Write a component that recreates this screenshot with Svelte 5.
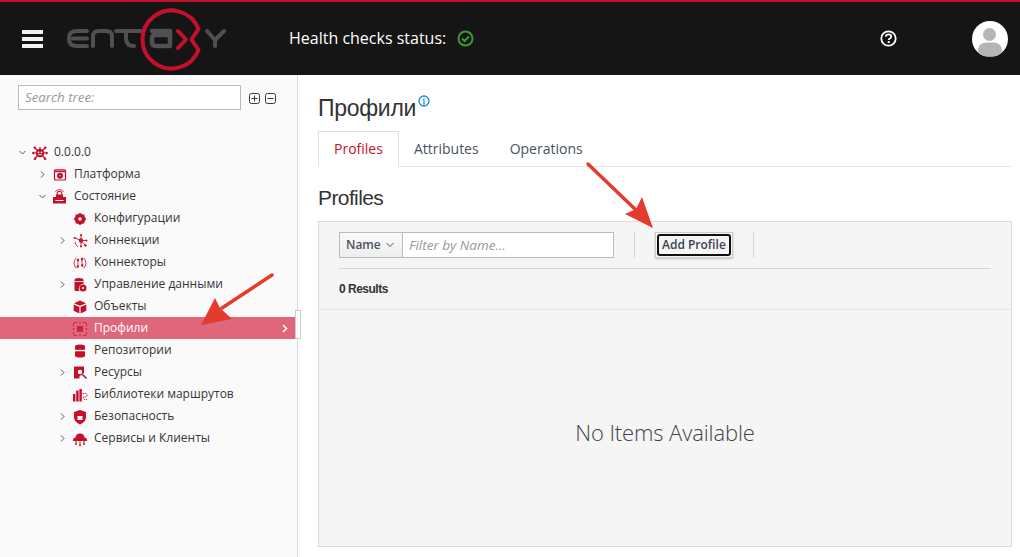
<script>
  const nodes = [
    { label: '0.0.0.0', level: 0, chevron: 'down', icon: 'root' },
    { label: 'Платформа', level: 1, chevron: 'right', icon: 'platform' },
    { label: 'Состояние', level: 1, chevron: 'down', icon: 'state' },
    { label: 'Конфигурации', level: 2, icon: 'gear' },
    { label: 'Коннекции', level: 2, chevron: 'right', icon: 'net' },
    { label: 'Коннекторы', level: 2, icon: 'conn' },
    { label: 'Управление данными', level: 2, chevron: 'right', icon: 'data' },
    { label: 'Объекты', level: 2, icon: 'cube' },
    { label: 'Профили', level: 2, icon: 'profile', selected: true },
    { label: 'Репозитории', level: 2, icon: 'db' },
    { label: 'Ресурсы', level: 2, chevron: 'right', icon: 'res' },
    { label: 'Библиотеки маршрутов', level: 2, icon: 'lib' },
    { label: 'Безопасность', level: 2, chevron: 'right', icon: 'shield' },
    { label: 'Сервисы и Клиенты', level: 2, chevron: 'right', icon: 'cloud' }
  ];
</script>

<div class="page">
  <header class="top">
    <button class="burger" aria-label="menu"><span></span><span></span><span></span></button>
    <svg class="logo" width="170" height="68" viewBox="60 5 170 68" fill="none">
      <g stroke="#505050" stroke-width="4" stroke-linecap="round" stroke-linejoin="round">
        <path d="M87 31H77Q69 31 69 38V39Q69 46 77 46H87M73 38.500H87" />
        <path d="M93 46V36Q93 31 99 31H106Q112 31 112 36V46" />
        <path d="M116 31H141M126 31V38Q126 46 134 46" />
        <path d="M152 31H170V46H156Q152 46 152 42V38Q152 35 156 35H170" stroke-width="4.500" />
        <path d="M207 31L215 40M224 31L215 40V46" />
      </g>
      <path d="M178 31L186 39.500L178 48" stroke="#c4102c" stroke-width="4" stroke-linecap="round" stroke-linejoin="round" />
      <path d="M198.500 29A29 29 0 1 0 198.500 50L191.500 39.500Z" stroke="#c4102c" stroke-width="4" stroke-linejoin="round" />
    </svg>
    <div class="health">
      <span>Health checks status:</span>
      <svg width="17" height="17" viewBox="0 0 17 17" fill="none" stroke="#3b9a35">
        <circle cx="8.500" cy="8.500" r="7" stroke-width="2" />
        <path d="M5 8.500L7.500 11L12 6.500" stroke-width="2" />
      </svg>
    </div>
    <svg class="help" width="17" height="17" viewBox="0 0 17 17">
      <circle cx="8.500" cy="8.500" r="7.200" fill="#111" stroke="#fff" stroke-width="1.800" />
      <path d="M5.800 6.800Q6 4.300 8.500 4.300Q11.200 4.300 11.200 6.500Q11.200 7.800 9.800 8.500Q8.700 9 8.700 10" fill="none" stroke="#fff" stroke-width="1.800" />
      <rect x="7.700" y="11" width="2" height="2" fill="#fff" />
    </svg>
    <svg class="avatar" width="36" height="36" viewBox="0 0 36 36">
      <defs><clipPath id="av"><circle cx="18" cy="18" r="18" /></clipPath></defs>
      <g clip-path="url(#av)">
        <rect width="36" height="35.500" fill="#fff" />
        <circle cx="17.500" cy="13.500" r="6.500" fill="#b5b5b5" />
        <path d="M6 35.500V30Q6 22 14 21.500H22Q30 22 30 30V35.500Z" fill="#b5b5b5" />
      </g>
    </svg>
  </header>

  <div class="body">
    <aside class="side">
      <div class="search">
        <input class="tree-input" placeholder="Search tree:" />
        <svg width="28" height="14" viewBox="0 0 28 14" fill="none" stroke="#333b4a">
          <rect x="1.500" y="2.500" width="10" height="10" rx="2" />
          <path d="M3.500 7.500H9.500M6.500 4.500V10.500" />
          <rect x="17.500" y="2.500" width="10" height="10" rx="2" />
          <path d="M19.500 7.500H25.500" />
        </svg>
      </div>
      <ul class="tree">
        {#each nodes as n}
          <li class="node lvl{n.level}" class:selected={n.selected}>
            <span class="chev">
              {#if n.chevron === 'down'}
                <svg width="9" height="9" viewBox="0 0 9 9" fill="none" stroke="#4a5a70"><path d="M1.500 3L4.500 6L7.500 3" /></svg>
              {:else if n.chevron === 'right'}
                <svg width="9" height="9" viewBox="0 0 9 9" fill="none" stroke="#4a5a70"><path d="M3 1.500L6 4.500L3 7.500" /></svg>
              {/if}
            </span>
            <svg class="ico" width="16" height="16" viewBox="0 0 16 16" fill="#c4102c" stroke="#c4102c" stroke-width="0">
              {#if n.icon === 'root'}
                <path d="M8 8L3 3M8 8L13 3M8 8H1.500M8 8H14.500M8 8L3 13.500M8 8L13 13.500M8 2V8" stroke-width="1.200" />
                <circle cx="8" cy="8" r="4.300" />
                <circle cx="6.500" cy="7.300" r="0.900" fill="#fff" /><circle cx="9.500" cy="7.300" r="0.900" fill="#fff" />
                <rect x="6.300" y="9.300" width="3.400" height="0.800" fill="#fff" />
                <circle cx="2.800" cy="2.800" r="1.300" /><circle cx="13.200" cy="2.800" r="1.300" /><circle cx="1.300" cy="8" r="1.200" /><circle cx="14.700" cy="8" r="1.200" /><circle cx="3" cy="13.700" r="1.300" /><circle cx="13" cy="13.700" r="1.300" />
              {:else if n.icon === 'platform'}
                <rect x="2.500" y="2.800" width="11" height="10.200" rx="1" fill="none" stroke-width="1.200" />
                <path d="M2.500 4.500H13.500" stroke-width="1.400" />
                <circle cx="8" cy="8.700" r="1.800" fill="none" stroke-width="2.400" />
              {:else if n.icon === 'state'}
                <rect x="1" y="8" width="13" height="6.500" />
                <rect x="4" y="5.500" width="7" height="3" />
                <path d="M5.200 7V4.300Q5.200 2.200 7.500 2.200Q9.800 2.200 9.800 4.300V7" fill="none" stroke-width="1.100" />
                <path d="M3.300 2.500Q7.500 -1.300 11.700 2.500" fill="none" stroke-width="0.800" />
                <rect x="3.500" y="11" width="8" height="1" fill="#fff" />
              {:else if n.icon === 'gear'}
                <circle cx="8" cy="8" r="3.600" fill="none" stroke-width="3.600" />
                <path d="M8 1.800V14.200M1.800 8H14.200M3.600 3.600L12.400 12.400M12.400 3.600L3.600 12.400" stroke-width="1.300" stroke-dasharray="1.800 8.600" />
              {:else if n.icon === 'net'}
                <path d="M9 7.500V2M9 7.500H14.500M9 7.500L3 5M9 7.500L9 13.500M9 7.500L13 12" stroke-width="0.900" />
                <path d="M3 9A6.500 6.500 0 0 0 6 14" fill="none" stroke-width="0.800" />
                <circle cx="9" cy="7.500" r="2.200" />
                <circle cx="9" cy="2" r="1.100" /><circle cx="14.500" cy="7.500" r="1" /><circle cx="2.700" cy="5" r="1.100" /><circle cx="9" cy="13.500" r="1" /><circle cx="13.500" cy="12.500" r="1.200" />
              {:else if n.icon === 'conn'}
                <path d="M4.500 2.800A6.800 6.800 0 0 0 4.500 13.300M11.500 2.800A6.800 6.800 0 0 1 11.500 13.300" fill="none" stroke-width="0.800" />
                <circle cx="6" cy="5" r="1.200" /><circle cx="5.800" cy="11.500" r="1.200" /><circle cx="10" cy="4" r="1.200" /><circle cx="10.200" cy="10.500" r="1.200" />
                <path d="M6 5V11.500M10 4V10.500" stroke-width="0.800" />
              {:else if n.icon === 'data'}
                <path d="M2.500 3Q2.500 1 7 1Q11.500 1 11.500 3V7A4.500 4.500 0 0 0 7.500 14H3.500Q2.500 14 2.500 13Z" />
                <rect x="2.500" y="4.200" width="9" height="0.800" fill="#fff" />
                <circle cx="11" cy="11" r="2.300" fill="none" stroke-width="2.400" />
              {:else if n.icon === 'cube'}
                <path d="M8 1.500L14 4.200L8 6.800L2 4.200Z" />
                <path d="M1.700 5.400L7.400 7.900V14.500L1.700 11.800Z" />
                <path d="M14.300 5.400L8.600 7.900V14.500L14.300 11.800Z" />
              {:else if n.icon === 'profile'}
                <rect x="5" y="5" width="6" height="6" />
                <path d="M1.500 5V3Q1.500 1.500 3 1.500H5M11 1.500H13Q14.500 1.500 14.500 3V5M14.500 11V13Q14.500 14.500 13 14.500H11M5 14.500H3Q1.500 14.500 1.500 13V11M8 0.500V3M8 13V15.500M0.500 8H3M13 8H15.500" fill="none" stroke-width="1" />
              {:else if n.icon === 'db'}
                <path d="M3 3.500Q3 1.500 8 1.500Q13 1.500 13 3.500V12.500Q13 14.500 8 14.500Q3 14.500 3 12.500Z" />
                <rect x="3" y="6.800" width="10" height="1.500" fill="#fff" />
              {:else if n.icon === 'res'}
                <path d="M2 1.500H12V8A4.500 4.500 0 0 0 7.500 13.500H2Z" />
                <circle cx="8" cy="7" r="2.800" fill="#fff" stroke-width="1.200" />
                <path d="M10.500 9.500L14.500 13.500" stroke-width="1.700" />
              {:else if n.icon === 'lib'}
                <rect x="1" y="7" width="2.400" height="7.500" /><rect x="4.200" y="3.500" width="2.400" height="11" /><rect x="7.400" y="2" width="2.400" height="12.500" />
                <path d="M10.500 6.500H13.500Q15 6.500 15 8.500Q15 10 13 10H11.500Q11 12.500 13 12.500H15" fill="none" stroke-width="0.900" stroke-dasharray="1.500 0.800" />
              {:else if n.icon === 'shield'}
                <path d="M8 1L14 3V8Q14 13 8 15.500Q2 13 2 8V3Z" />
                <rect x="5.500" y="7" width="5" height="4" fill="#fff" />
                <path d="M6.500 7V5.500Q6.500 4.500 8 4.500Q9.500 4.500 9.500 5.500V7" fill="none" stroke="#fff" />
              {:else if n.icon === 'cloud'}
                <path d="M1 10Q0.500 7 3.500 6.500Q4 2.500 8 2.500Q12 2.500 12.500 6.500Q15.500 7 15 10Z" />
                <path d="M4 10V12.500M8 10V13.500M12 10V12.500" stroke-width="1" />
                <circle cx="4" cy="13" r="1" /><circle cx="8" cy="14.300" r="1" /><circle cx="12" cy="13" r="1" />
              {/if}
            </svg>
            <span class="label">{n.label}</span>
            {#if n.selected}
              <svg class="sel-chev" width="8" height="9" viewBox="0 0 8 9" fill="none" stroke="#fff" stroke-width="1.500"><path d="M2 1L5.500 4.500L2 8" /></svg>
            {/if}
          </li>
        {/each}
      </ul>
      <span class="grip"></span>
    </aside>

    <main class="main">
      <h1>Профили
        <svg class="info" width="12" height="12" viewBox="0 0 12 12" fill="none" stroke="#1a8fd6">
          <circle cx="6" cy="6" r="5" stroke-width="1.300" />
          <path d="M6 5V9M6 3V4.200M5 5H6M5 9H7" stroke-width="1.100" />
        </svg>
      </h1>
      <nav class="tabs">
        <span class="tab active">Profiles</span>
        <span class="tab">Attributes</span>
        <span class="tab ops">Operations</span>
      </nav>
      <h2>Profiles</h2>
      <section class="panel">
        <div class="toolbar">
          <div class="tools">
            <div class="filter">
              <span class="filter-kind">Name
                <svg width="8" height="6" viewBox="0 0 8 6" fill="none" stroke="#555"><path d="M0.500 1L4 4.500L7.500 1" /></svg>
              </span>
              <input class="filter-input" placeholder="Filter by Name..." />
            </div>
            <i class="sep"></i>
            <span class="add-wrap"><button class="add">Add Profile</button></span>
            <i class="sep"></i>
          </div>
          <div class="results">0 Results</div>
        </div>
        <div class="empty">No Items Available</div>
      </section>
    </main>
  </div>

  <svg class="arrows" width="1020" height="557" viewBox="0 0 1020 557" fill="#e53a2e" stroke="none">
    <path d="M272 275L222 308" stroke="#e53a2e" stroke-width="3.500" stroke-linecap="round" />
    <path d="M201 325L215 298L220 308L232 319Z" />
    <path d="M588 164L638 212" stroke="#e53a2e" stroke-width="3.500" stroke-linecap="round" />
    <path d="M653 228L625 214L636 209L642 197Z" />
  </svg>
</div>

<style>
  :global(body) {
    margin: 0;
    background: #fff;
    font-family: "Open Sans", "Noto Sans", sans-serif;
    color: #363636;
  }
  .page {
    position: relative;
    width: 1020px;
    height: 557px;
    overflow: hidden;
  }
  .top {
    height: 73px;
    background: #151515;
    border-top: 2px solid #c4102c;
    display: flex;
    align-items: center;
    padding-left: 22px;
  }
  .burger {
    width: 21px;
    padding: 0;
    border: 0;
    background: none;
    display: flex;
    flex-direction: column;
    gap: 3px;
  }
  .burger span {
    height: 4px;
    background: #f2f2f2;
  }
  .logo {
    margin-left: 17px;
    flex: none;
  }
  .health {
    margin-left: 59px;
    display: flex;
    align-items: center;
    gap: 11px;
    color: #fff;
    font-size: 16px;
    white-space: nowrap;
    margin-top: -1px;
  }
  .help {
    margin-left: auto;
    margin-right: 75px;
  }
  .avatar {
    margin-right: 12px;
    margin-top: 1px;
  }
  .body {
    display: flex;
    height: 482px;
  }
  .side {
    position: relative;
    width: 297px;
    background: #fafafa;
    border-right: 1px solid #d9d9d9;
    flex: none;
  }
  .search {
    display: flex;
    align-items: center;
    gap: 7px;
    padding: 10px 0 0 18px;
  }
  .tree-input {
    width: 223px;
    height: 25px;
    box-sizing: border-box;
    border: 1px solid #bbb;
    padding: 0 6px 2px;
    font: italic 13.300px "Open Sans", sans-serif;
    background: #fff;
  }
  .tree-input::placeholder {
    color: #999;
    opacity: 1;
  }
  .tree {
    list-style: none;
    margin: 31px 0 0;
    padding: 0;
  }
  .node {
    height: 22px;
    display: flex;
    align-items: center;
    font-size: 12px;
    color: #363636;
  }
  .lvl0 { padding-left: 18px; }
  .lvl1 { padding-left: 38px; }
  .lvl2 { padding-left: 58px; }
  .chev {
    width: 14px;
    display: flex;
  }
  .ico {
    flex: none;
    margin: 2px 6px 0 0;
  }
  .label {
    padding-bottom: 2px;
  }
  .selected {
    background: #e0677b;
    color: #fff;
    position: relative;
    margin-right: 2px;
  }
  .selected .ico {
    opacity: 0.75;
  }
  .sel-chev {
    position: absolute;
    right: 6px;
    top: 7px;
  }
  .grip {
    position: absolute;
    right: -4px;
    top: 235px;
    width: 6px;
    height: 29px;
    background: #fff;
    border: 1px solid #ccc;
    box-sizing: border-box;
  }
  .main {
    flex: 1;
    padding: 0 8px 0 20px;
    min-width: 0;
  }
  h1 {
    margin: 20px 0 0;
    font: 400 23px/26px "Liberation Sans", sans-serif;
    color: #333;
    display: flex;
    align-items: flex-start;
    gap: 2px;
    letter-spacing: -0.3px;
  }
  .info { margin-top: 0; }
  .tabs {
    display: flex;
    margin-top: 10px;
    border-bottom: 1px solid #e6e6e6;
    height: 35px;
    font-size: 14px;
    color: #4a5260;
  }
  .tab {
    padding: 0 15px;
    line-height: 35px;
    height: 36px;
    box-sizing: border-box;
  }
  .tab.ops { margin-left: 1px; }
  .tab.active {
    color: #c4102c;
    background: #fff;
    border: 1px solid #e0e0e0;
    border-bottom: 0;
    line-height: 33px;
  }
  h2 {
    margin: 19px 0 0;
    font: 400 21px/24px "Liberation Sans", sans-serif;
    letter-spacing: -0.6px;
    color: #333;
  }
  .panel {
    margin-top: 11px;
    height: 326px;
    border: 1px solid #dcdcdc;
    background: #f5f5f5;
    box-sizing: border-box;
  }
  .toolbar {
    height: 88px;
    box-sizing: border-box;
    padding: 10px 20px 0;
    border-bottom: 1px solid #e6e6e6;
  }
  .tools {
    display: flex;
    align-items: flex-start;
    height: 37px;
    box-sizing: border-box;
    border-bottom: 1px solid #d5d5d5;
  }
  .filter {
    display: flex;
    height: 26px;
    border: 1px solid #bbb;
    box-sizing: border-box;
    width: 275px;
  }
  .filter-kind {
    width: 63px;
    box-sizing: border-box;
    background: linear-gradient(#fafafa, #ededed);
    border-right: 1px solid #bbb;
    font-size: 12px;
    font-weight: 600;
    color: #4a5260;
    padding: 0 0 1px 6px;
    display: flex;
    align-items: center;
    gap: 5px;
  }
  .filter-input {
    flex: 1;
    min-width: 0;
    border: 0;
    padding: 0 6px;
    font: italic 13.500px "Open Sans", sans-serif;
  }
  .filter-input::placeholder {
    color: #999;
    opacity: 1;
  }
  .sep {
    width: 1px;
    height: 26px;
    background: #d5d5d5;
  }
  .tools .sep:nth-of-type(1) { margin: 0 20px; }
  .tools .sep:nth-of-type(2) { margin-left: 20px; }
  .add-wrap {
    display: block;
    height: 26px;
    box-sizing: border-box;
    border: 1px solid #ccc;
    box-shadow: 0 1px 2px rgba(0, 0, 0, 0.2);
    padding: 1px;
  }
  .add {
    display: block;
    height: 22px;
    padding: 0 3px 1px;
    border: 2px solid #111;
    border-radius: 3px;
    background: #f5f5f5;
    font: 600 12px/16px "Open Sans", sans-serif;
    color: #3a4250;
    white-space: nowrap;
  }
  .results {
    margin-top: 13px;
    font: 700 12px "Liberation Sans", sans-serif;
    letter-spacing: -0.5px;
    color: #333;
  }
  .empty {
    height: 236px;
    box-sizing: border-box;
    padding-top: 7px;
    display: flex;
    align-items: center;
    justify-content: center;
    font-size: 22px;
    font-weight: 300;
    letter-spacing: -0.12px;
    color: #444;
  }
  .arrows {
    position: absolute;
    left: 0;
    top: 0;
    pointer-events: none;
  }
</style>
